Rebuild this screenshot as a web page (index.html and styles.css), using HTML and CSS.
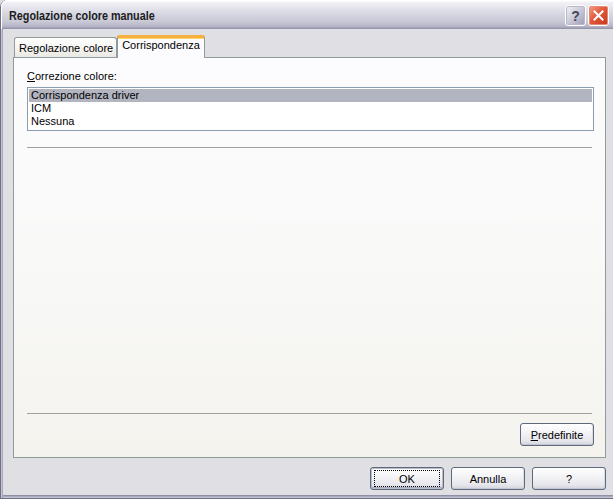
FILE: index.html
```html
<!DOCTYPE html>
<html lang="it">
<head>
    <meta charset="UTF-8">
    <title>Regolazione colore manuale</title>
    <link rel="stylesheet" href="styles.css">
</head>
<body>
    <div class="window">
        <div class="titlebar">
            <span class="title">Regolazione colore manuale</span>
            <div class="caption-buttons">
                <button class="cap help">?</button>
                <button class="cap close">
                    <svg width="11" height="11" viewBox="0 0 11 11">
                        <path d="M1.5 1.5 L9.5 9.5 M9.5 1.5 L1.5 9.5" stroke="#fff" stroke-width="2" stroke-linecap="square"/>
                    </svg>
                </button>
            </div>
        </div>

        <div class="client">
            <div class="tabs">
                <div class="tab">Regolazione colore</div>
                <div class="tab active">Corrispondenza</div>
            </div>

            <div class="panel">
                <div class="label"><u>C</u>orrezione colore:</div>
                <ul class="listbox">
                    <li class="selected">Corrispondenza driver</li>
                    <li>ICM</li>
                    <li>Nessuna</li>
                </ul>
                <div class="etched"></div>

                <div class="spacer"></div>

                <div class="etched"></div>
                <div class="panel-actions">
                    <button class="btn"><u>P</u>redefinite</button>
                </div>
            </div>

            <div class="footer">
                <button class="btn default"><span class="focus">OK</span></button>
                <button class="btn">Annulla</button>
                <button class="btn">?</button>
            </div>
        </div>
    </div>
</body>
</html>
```

FILE: styles.css
```css
* {
    margin: 0;
    padding: 0;
    box-sizing: border-box;
}

body {
    width: 613px;
    height: 499px;
    overflow: hidden;
    background: #e0dfe3;
    font-family: 'Liberation Sans', Arial, sans-serif;
    font-size: 11px;
    color: #000;
}

.window {
    width: 616px;
    height: 499px;
    display: flex;
    flex-direction: column;
    border-left: 1px solid #6f6f85;
    border-bottom: 1px solid #6f6f85;
    border-top-left-radius: 7px;
    background: #e0dfe3;
    box-shadow: inset 1px 0 0 #c4c4d2, inset 2px 0 0 #a9a9bd, inset 0 -1px 0 #c4c4d2, inset 0 -2px 0 #a9a9bd, inset 0 -3px 0 #8f8fa6;
}

/* caption */
.titlebar {
    height: 29px;
    flex: none;
    display: flex;
    align-items: center;
    justify-content: space-between;
    padding: 0 6px 0 8px;
    border-top-left-radius: 7px;
    background: linear-gradient(#ffffff 0%, #eeeef3 12%, #d9d9e4 45%, #c8c8d6 75%, #b3b3c6 92%, #8e8ea5 100%);
    box-shadow: inset 0 1px 0 #fff, inset 1px 0 0 #fff;
}

/* caption font is a condensed face; squeeze the sans to match */
.title {
    display: inline-block;
    font-family: 'Liberation Sans', Arial, sans-serif;
    font-weight: bold;
    font-size: 13px;
    color: #1c1c1c;
    padding-top: 2px;
    transform: scaleX(0.83);
    transform-origin: left center;
}

.caption-buttons {
    display: flex;
    gap: 2px;
    padding-top: 2px;
    margin-right: 1px;
}

.cap {
    width: 21px;
    height: 21px;
    border: 1px solid #fff;
    border-radius: 3px;
    display: flex;
    align-items: center;
    justify-content: center;
    font-family: 'Liberation Sans', Arial, sans-serif;
    font-weight: bold;
    font-size: 14px;
}

.cap.help {
    background: linear-gradient(135deg, #f4f4f8 0%, #c9c9d8 50%, #9c9cb4 100%);
    color: #44465c;
    box-shadow: inset 0 0 0 1px #b8b8cc;
}

.cap.close {
    background: linear-gradient(135deg, #f0a189 0%, #e3593a 45%, #c2361d 100%);
    box-shadow: inset 0 0 0 1px #e58a72;
}

/* client area */
.client {
    flex: 1;
    display: flex;
    flex-direction: column;
    padding: 6px 10px 8px 12px;
}

.tabs {
    display: flex;
    align-items: flex-end;
    height: 22px;
    padding-left: 1px;
    position: relative;
    z-index: 1;
}

.tab {
    height: 20px;
    padding: 4px 3px 0 4px;
    border: 1px solid #919b9c;
    border-bottom: none;
    border-radius: 3px 3px 0 0;
    background: linear-gradient(#ffffff, #f3f3f0 60%, #e9e8e2);
    color: #000;
}

.tab.active {
    height: 23px;
    padding: 1px 4px 0 4px;
    margin-bottom: -1px;
    border-top: 3px solid #f5b040;
    border-radius: 2px 2px 0 0;
    background: #fcfcfe;
    box-shadow: inset 0 1px 0 #ffd46b;
}

.panel {
    flex: 1;
    display: flex;
    flex-direction: column;
    border: 1px solid #919b9c;
    background: linear-gradient(#fcfcfe, #f9f9f8 50%, #f4f3ee);
    padding: 12px 11px 11px 13px;
}

.label {
    height: 17px;
    color: #000;
}

.listbox {
    list-style: none;
    height: 44px;
    border: 1px solid #8c9db0;
    background: #fff;
    padding: 1px;
}

.listbox li {
    height: 13px;
    line-height: 13px;
    padding-left: 2px;
}

.listbox li.selected {
    background: #b2b4bf;
}

.etched {
    height: 1px;
    background: #a0a0a0;
    margin-top: 16px;
    margin-right: 2px;
}

.spacer {
    flex: 1;
}

.panel-actions {
    display: flex;
    justify-content: flex-end;
    padding-top: 9px;
}

/* push buttons */
.btn {
    width: 74px;
    height: 23px;
    border: 1px solid #5c6a7c;
    border-radius: 3px;
    background: linear-gradient(#ffffff 0%, #f4f4f7 40%, #e6e6ec 80%, #d3d3dc 100%);
    box-shadow: inset 0 -1px 0 #c6c5d3, inset -1px 0 0 #dcdce4;
    font-family: 'Liberation Sans', Arial, sans-serif;
    font-size: 11px;
    color: #000;
    display: flex;
    align-items: center;
    justify-content: center;
}

.btn.default {
    box-shadow: inset 0 0 0 1px #b9bccb, inset 0 -2px 0 #a9acbf;
}

.btn .focus {
    display: flex;
    align-items: center;
    justify-content: center;
    width: 66px;
    height: 17px;
    border: 1px dotted #000;
}

.footer {
    display: flex;
    justify-content: flex-end;
    gap: 7px;
    padding-top: 9px;
}
```
